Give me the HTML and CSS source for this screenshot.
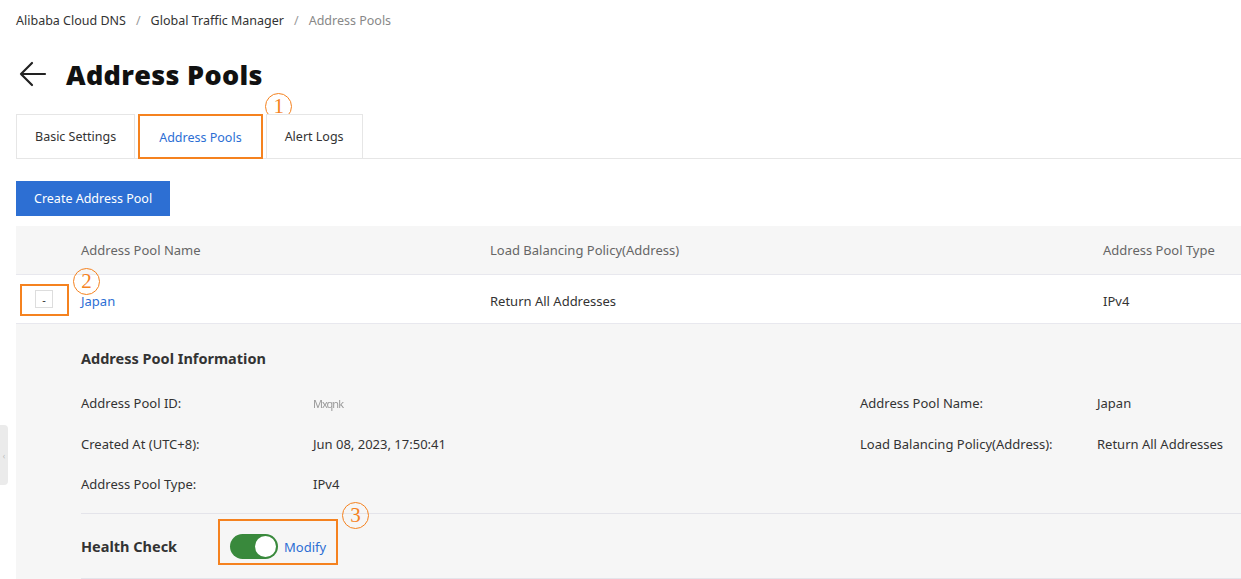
FILE: index.html
```html
<!DOCTYPE html>
<html>
<head>
<meta charset="utf-8">
<link rel="stylesheet" href="styles.css">
</head>
<body>
<div class="page">
  <div class="crumbs">
    <span class="crumb">Alibaba Cloud DNS</span><span class="sep">/</span>
    <span class="crumb">Global Traffic Manager</span><span class="sep">/</span>
    <span class="crumb last">Address Pools</span>
  </div>
  <div class="title-row">
    <svg class="back" width="30" height="30" viewBox="0 0 30 30"><path d="M28 15H4M15 4L4 15L15 26" fill="none" stroke="#222" stroke-width="2.2" stroke-linecap="round" stroke-linejoin="round"/></svg>
    <h1 class="title">Address Pools</h1>
  </div>
  <div class="tabs">
    <div class="tab">Basic Settings</div>
    <div class="tab active">Address Pools<span class="mark-box"></span><span class="num num1">1</span></div>
    <div class="tab">Alert Logs</div>
  </div>
  <div class="actions">
    <button class="btn">Create Address Pool</button>
  </div>
  <div class="table">
    <div class="row head">
      <div></div>
      <div>Address Pool Name</div>
      <div>Load Balancing Policy(Address)</div>
      <div>Address Pool Type</div>
    </div>
    <div class="row body">
      <div class="exp-cell"><span class="exp">-</span><span class="mark-box exp-mark"></span><span class="num num2">2</span></div>
      <div class="cell"><a class="link">Japan</a></div>
      <div class="cell">Return All Addresses</div>
      <div class="cell">IPv4</div>
    </div>
    <div class="detail">
      <h3 class="sec-title">Address Pool Information</h3>
      <div class="info">
        <div class="lbl">Address Pool ID:</div><div class="val"><span class="blur">Mxqnk</span></div>
        <div class="lbl">Address Pool Name:</div><div class="val">Japan</div>
        <div class="lbl">Created At (UTC+8):</div><div class="val">Jun 08, 2023, 17:50:41</div>
        <div class="lbl">Load Balancing Policy(Address):</div><div class="val">Return All Addresses</div>
        <div class="lbl">Address Pool Type:</div><div class="val">IPv4</div>
        <div class="lbl"></div><div class="val"></div>
      </div>
      <div class="hc">
        <div class="hc-title">Health Check</div>
        <div class="hc-ctrl">
          <span class="switch"><span class="knob"></span></span>
          <a class="link">Modify</a>
          <span class="mark-box hc-mark"></span><span class="num num3">3</span>
        </div>
      </div>
    </div>
  </div>
</div>
<div class="side-handle"><span>‹</span></div>
</body>
</html>
```
FILE: styles.css
```css
html, body { margin: 0; padding: 0; background: #fff; }
body {
  font-family: "Noto Sans", "Open Sans", sans-serif;
  font-size: 13px;
  color: #333;
  width: 1241px;
  height: 579px;
  overflow: hidden;
  position: relative;
}
.page { padding-left: 16px; }
.crumbs {
  height: 40px;
  display: flex;
  align-items: center;
  font-size: 12.5px;
  color: #333;
}
.sep { color: #999; margin: 0 10px; }
.crumb.last { color: #888; }
.title-row {
  display: flex;
  align-items: center;
  height: 40px;
  margin-top: 14px;
}
.back { margin-left: 1px; margin-right: 19px; }
.title {
  margin: 0;
  font-family: "Open Sans", sans-serif;
  font-weight: 800;
  font-size: 27px;
  color: #111;
  letter-spacing: 0.3px;
}
.tabs {
  margin-top: 20px;
  display: flex;
  height: 44px;
  border-bottom: 1px solid #e6e6e6;
  box-sizing: content-box;
}
.tab {
  position: relative;
  border: 1px solid #e6e6e6;
  border-bottom: none;
  padding: 0 18px;
  display: flex;
  align-items: center;
  margin-right: 3px;
  color: #333;
  font-size: 12.5px;
  background: #fff;
}
.tab.active { color: #2c6ed4; border-top: 2px solid #2c6ed4; padding: 0 20px; }
.mark-box {
  position: absolute;
  border: 2px solid #f5821f;
  pointer-events: none;
}
.tab .mark-box { left: -1px; right: -1px; top: -2px; bottom: -1px; }
.num {
  position: absolute;
  box-sizing: border-box;
  width: 27px;
  height: 27px;
  border: 1.4px solid #f5821f;
  border-radius: 50%;
  color: #f5821f;
  font-family: "Liberation Serif", serif;
  font-size: 21px;
  line-height: 24px;
  text-align: center;
}
.num1 { left: 126px; top: -23px; }
.actions { margin-top: 22px; height: 35px; }
.btn {
  height: 35px;
  border: none;
  background: #2d6fd3;
  color: #fff;
  font-family: "Noto Sans", sans-serif;
  font-size: 12.5px;
  padding: 0 18px;
  cursor: pointer;
}
.table { margin-top: 10px; }
.row {
  display: grid;
  grid-template-columns: 65px 409px 613px 1fr;
  align-items: center;
  border-bottom: 1px solid #e8e8ee;
}
.row.head { height: 48px; background: #f6f6f6; color: #666; }
.row.body { height: 48px; background: #fff; }
.row.body .cell { padding-top: 4px; line-height: 14px; }
.exp-cell { position: relative; height: 100%; display: flex; align-items: center; }
.exp {
  margin-left: 19px;
  width: 16px;
  height: 16px;
  border: 1px solid #ddd;
  background: #fff;
  display: flex;
  align-items: center;
  justify-content: center;
  font-size: 11px;
  line-height: 1;
  color: #333;
}
.exp-mark { left: 4px; top: 9px; width: 45px; height: 28px; }
.num2 { left: 57px; top: -7px; }
.link { color: #2c6ed4; text-decoration: none; }
.detail {
  background: #f6f6f6;
  padding-left: 65px;
  padding-top: 21px;
  height: 260px;
}
.sec-title { margin: 0; font-size: 14.5px; font-weight: 700; color: #333; height: 26px; line-height: 26px; }
.info {
  margin-top: 22px;
  display: grid;
  grid-template-columns: 232px 547px 237px 1fr;
  grid-auto-rows: 40.5px;
  align-items: start;
  line-height: 20px;
}
.blur { color: #999; filter: blur(0.7px); font-size: 11px; letter-spacing: -1px; }
.hc {
  border-top: 1px solid #e4e4ea;
  border-bottom: 1px solid #e4e4ea;
  height: 64px;
  margin-top: -2px;
  display: flex;
  align-items: center;
}
.hc-title { width: 149px; font-size: 14.5px; font-weight: 700; color: #333; padding-top: 1px; }
.hc-ctrl { position: relative; display: flex; align-items: center; height: 44px; padding-top: 2px; }
.switch {
  width: 48px;
  height: 25px;
  border-radius: 13px;
  background: #39893c;
  position: relative;
  margin-right: 6px;
}
.knob {
  position: absolute;
  right: 2px;
  top: 2px;
  width: 21px;
  height: 21px;
  border-radius: 50%;
  background: #fff;
}
.hc-ctrl .link { font-size: 13px; }
.hc-mark { left: -12px; top: -4px; width: 116px; height: 42px; }
.num3 { left: 112px; top: -21px; }
.side-handle {
  position: absolute;
  left: 0;
  top: 425px;
  width: 8px;
  height: 60px;
  background: #ebebeb;
  border-radius: 0 4px 4px 0;
  display: flex;
  align-items: center;
  justify-content: center;
  color: #bbb;
  font-size: 8px;
  overflow: hidden;
}
```
